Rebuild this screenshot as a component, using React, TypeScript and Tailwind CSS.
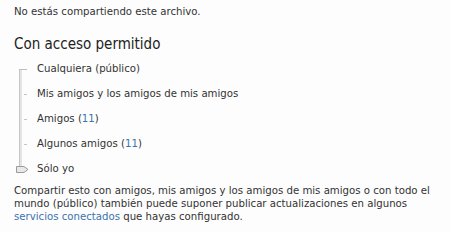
import React from "react";

const OPTIONS: { label: string; count?: number }[] = [
  { label: "Cualquiera (público)" },
  { label: "Mis amigos y los amigos de mis amigos" },
  { label: "Amigos", count: 11 },
  { label: "Algunos amigos", count: 11 },
  { label: "Sólo yo" },
];

function Track() {
  // row height 25, centers at 12.5 + 25 * i
  return (
    <svg width="23" height="125" viewBox="0 0 23 125" className="shrink-0">
      <rect x="5" y="12" width="3" height="98" fill="#e4e4e4" />
      <line x1="5.5" y1="12" x2="5.5" y2="110" stroke="#c6c6c6" strokeWidth="1" />
      <line x1="5" y1="12.5" x2="13" y2="12.5" stroke="#bdbdbd" strokeWidth="1" />
      {[1, 2, 3].map((i) => (
        <line
          key={i}
          x1="10"
          y1={12.5 + 25 * i}
          x2="13"
          y2={12.5 + 25 * i}
          stroke="#c4c4c4"
          strokeWidth="1"
        />
      ))}
      <path
        d="M2.5 109.5 H10 L14 112.5 L10 115.5 H2.5 Z"
        fill="#e8e8e8"
        stroke="#9a9a9a"
        strokeWidth="1"
      />
    </svg>
  );
}

export default function App() {
  return (
    <div
      className="w-[450px] h-[232px] bg-[#fdfdfd] text-[#333] pl-[14px] pt-[5px]"
      style={{ fontFamily: '"DejaVu Sans Condensed", "DejaVu Sans", Verdana, sans-serif' }}
    >
      <div className="text-[11.3px] leading-[14px]">No estás compartiendo este archivo.</div>

      <div className="mt-[15px] text-[15px] leading-[20px] text-[#222]">Con acceso permitido</div>

      <div className="mt-[3px] flex">
        <Track />
        <div className="flex flex-col">
          {OPTIONS.map((o) => (
            <div key={o.label} className="h-[25px] flex items-center text-[11.3px]">
              {o.label}
              {o.count !== undefined && (
                <>
                  {" "}(<span className="text-[#3b73af]">{o.count}</span>)
                </>
              )}
            </div>
          ))}
        </div>
      </div>

      <p className="mt-[2px] text-[11.3px] leading-[13px]">
        Compartir esto con amigos, mis amigos y los amigos de mis amigos o con todo el
        <br />
        mundo (público) también puede suponer publicar actualizaciones en algunos
        <br />
        <span className="text-[#3b73af]">servicios conectados</span> que hayas configurado.
      </p>
    </div>
  );
}
